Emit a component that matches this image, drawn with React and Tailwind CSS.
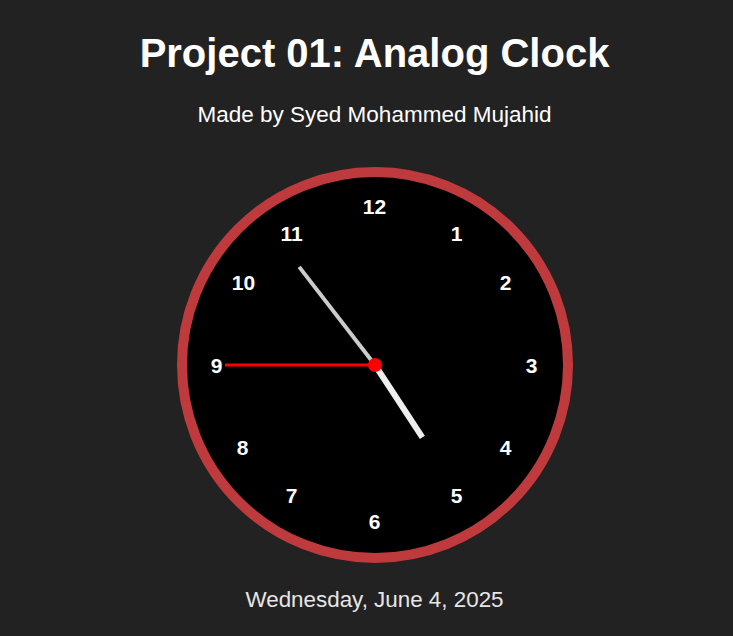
import React from "react";

const NUMS = [
  [12, 0, -159],
  [1, 82, -132],
  [2, 131, -83],
  [3, 157, 0],
  [4, 131, 82],
  [5, 82, 130],
  [6, 0, 156],
  [7, -83, 130],
  [8, -132, 82],
  [9, -158, 0],
  [10, -131, -83],
  [11, -83, -132],
];

function hand(angleDeg, len) {
  const a = (angleDeg * Math.PI) / 180;
  return { x2: 188 + len * Math.sin(a), y2: 188 - len * Math.cos(a) };
}

export default function App() {
  const hour = hand(146.8, 86.5);
  const minute = hand(322.3, 124);
  const second = hand(270, 150);
  return (
    <div
      className="min-h-[636px] bg-[#222222] flex flex-col items-center pl-4 pt-[33px] text-white"
      style={{ fontFamily: '"Liberation Sans", Arial, sans-serif' }}
    >
      <h1 className="text-[40px] font-bold leading-none text-white">
        Project 01: Analog Clock
      </h1>
      <p className="mt-[31px] text-[22.5px] leading-none text-white">
        Made by Syed Mohammed Mujahid
      </p>
      <div className="mt-[40px] relative w-[396px] h-[396px] rounded-full border-[10px] border-[#bf3a3d] bg-black">
        {NUMS.map(([n, x, y]) => (
          <span
            key={n}
            className="absolute text-[21px] font-bold leading-none text-white -translate-x-1/2 -translate-y-1/2"
            style={{ left: 188 + x, top: 188 + y }}
          >
            {n}
          </span>
        ))}
        <svg
          className="absolute inset-0"
          width="376"
          height="376"
          viewBox="0 0 376 376"
        >
          <line x1="188" y1="188" {...minute} stroke="#cccccc" strokeWidth="4" />
          <line x1="188" y1="188" {...hour} stroke="#eeeeee" strokeWidth="6" />
          <line x1="188" y1="188" {...second} stroke="#ff0000" strokeWidth="3" />
          <circle cx="188" cy="188" r="7" fill="#ff0000" />
        </svg>
      </div>
      <p className="mt-[26px] text-[22.4px] leading-none text-[#e6e6e6]">
        Wednesday, June 4, 2025
      </p>
    </div>
  );
}
